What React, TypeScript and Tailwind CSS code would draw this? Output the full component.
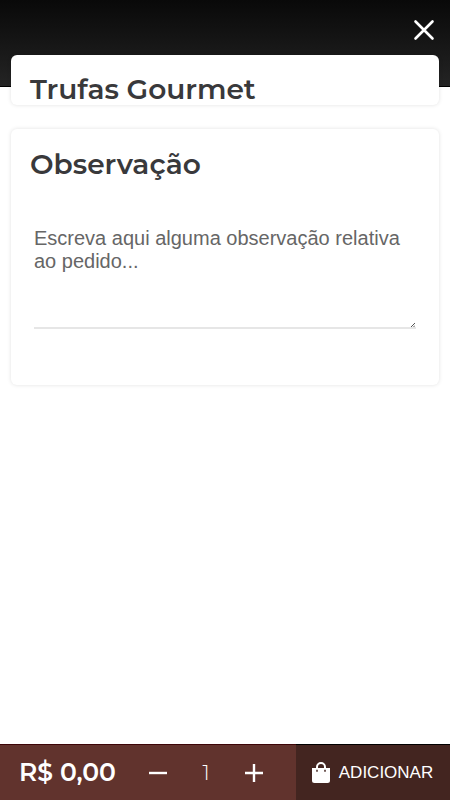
import { useState } from "react";

export default function App() {
  const [quantity, setQuantity] = useState(1);
  const [note, setNote] = useState("");

  return (
    <div className="flex min-h-screen flex-col bg-white font-['Liberation_Sans',Arial,sans-serif] text-[#39393b]">
      <header className="flex h-[87px] items-start justify-end border-b border-black bg-linear-to-b from-[#090909] to-[#242424] px-3 pt-4">
        <button type="button" aria-label="Fechar" className="flex size-7 items-center justify-center text-white">
          <svg viewBox="0 0 22 22" className="size-[22px]" fill="none" stroke="currentColor" strokeWidth="2.6" strokeLinecap="round" aria-hidden="true">
            <path d="M2.5 2.5l17 17M19.5 2.5l-17 17" />
          </svg>
        </button>
      </header>

      <main className="-mt-8 flex flex-1 flex-col gap-6 px-[11px] pb-6">
        <section className="rounded-md bg-white px-[19px] pt-[18px] shadow-[0_0_4px_rgba(0,0,0,0.12)]">
          <h1 className="font-[Montserrat,Inter,sans-serif] text-[28px] leading-8 font-semibold">Trufas Gourmet</h1>
        </section>

        <section className="rounded-md bg-white px-[23px] pt-4 pb-14 shadow-[0_0_4px_rgba(0,0,0,0.12)]">
          <h2 className="-mx-1 font-[Montserrat,Inter,sans-serif] text-[28px] leading-[38px] font-semibold">
            <label htmlFor="note">Observação</label>
          </h2>
          <div className="relative mt-11">
            <textarea
              id="note"
              value={note}
              onChange={(event) => setNote(event.target.value)}
              placeholder="Escreva aqui alguma observação relativa ao pedido..."
              className="block h-[102px] w-full resize-none overflow-hidden border-b-2 border-[#e6e6e6] text-[20px] leading-[23px] outline-none placeholder:text-[#666666]"
            />
            <svg viewBox="0 0 4 4" className="pointer-events-none absolute right-px bottom-[2px] size-1" stroke="#555555" aria-hidden="true">
              <path d="M0 4L4 0M2.5 4L4 2.5" />
            </svg>
          </div>
        </section>
      </main>

      <footer className="sticky bottom-0 flex h-14 border-t border-[#3d0508] bg-[#61332d] text-white">
        <div className="flex flex-1 items-center justify-between pr-7 pl-[19px]">
          <span className="font-[Montserrat,Inter,sans-serif] text-[25px] font-semibold whitespace-nowrap">R$ 0,00</span>
          <div className="flex items-center gap-6">
            <button type="button" aria-label="Diminuir" onClick={() => setQuantity(Math.max(1, quantity - 1))} className="flex size-7 items-center justify-center">
              <svg viewBox="0 0 20 20" className="size-5" stroke="currentColor" strokeWidth="2.4" aria-hidden="true">
                <path d="M1 10h18" />
              </svg>
            </button>
            <output className="w-5 text-center font-[Montserrat,Inter,sans-serif] text-[20px] font-light">{quantity}</output>
            <button type="button" aria-label="Aumentar" onClick={() => setQuantity(quantity + 1)} className="flex size-7 items-center justify-center">
              <svg viewBox="0 0 20 20" className="size-5" stroke="currentColor" strokeWidth="2.4" aria-hidden="true">
                <path d="M1 10h18M10 1v18" />
              </svg>
            </button>
          </div>
        </div>
        <button type="button" className="-mt-px flex w-[154px] items-center justify-center gap-2 border-t border-black bg-[#432520] pr-0.5 text-[17px]">
          <svg viewBox="0 0 20 22" className="h-[22px] w-5" aria-hidden="true">
            <path d="M6 8V5a4 4 0 0 1 8 0V8" fill="none" stroke="currentColor" strokeWidth="2" />
            <path d="M1 6h18v12.5a2.5 2.5 0 0 1-2.5 2.5h-13a2.5 2.5 0 0 1-2.5-2.5z" fill="currentColor" />
            <path d="M6 7.8v2M14 7.8v2" stroke="#432520" strokeWidth="1.5" />
          </svg>
          ADICIONAR
        </button>
      </footer>
    </div>
  );
}
